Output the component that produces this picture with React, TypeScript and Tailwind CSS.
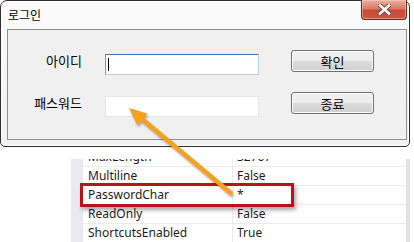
const ko = '"Noto Sans CJK KR", "Noto Sans", sans-serif';

const rows = [
  { name: 'MaxLength', value: '32767' },
  { name: 'Multiline', value: 'False' },
  { name: 'PasswordChar', value: '*' },
  { name: 'ReadOnly', value: 'False' },
  { name: 'ShortcutsEnabled', value: 'True' },
];

function WinButton({ label }: { label: string }) {
  return (
    <div className="w-[83px] h-[22px] rounded-[3px] border border-[#707070] bg-[linear-gradient(to_bottom,#f2f2f2_0%,#ebebeb_50%,#dddddd_50%,#cfcfcf_100%)] shadow-[inset_0_0_0_1px_#fbfbfb] flex items-center justify-center text-[13px] text-black leading-none">
      {label}
    </div>
  );
}

function CloseButton() {
  return (
    <div className="-mt-px mr-[2px] w-[46px] h-[20px] rounded-b-[4px] border border-t-0 border-[#6e2418] bg-[linear-gradient(to_bottom,#eab0a2_0%,#dc7a65_45%,#c94a32_55%,#c85a40_100%)] shadow-[inset_0_0_0_1px_rgba(255,210,200,0.5)] flex items-center justify-center">
      <svg width="13" height="11" viewBox="0 0 13 11">
        <path d="M2 1.5 L11 9.5 M11 1.5 L2 9.5" stroke="#5b4a48" strokeWidth="4.5" strokeLinecap="square" />
        <path d="M2 1.5 L11 9.5 M11 1.5 L2 9.5" stroke="#ffffff" strokeWidth="2.6" strokeLinecap="square" />
      </svg>
    </div>
  );
}

function LoginWindow() {
  return (
    <div className="w-[410px] h-[147px] rounded-t-[7px] rounded-b-[5px] border border-[#2f2f2f] bg-[linear-gradient(to_bottom,#fbfbfb_0%,#f1f1f1_100%)] shadow-[inset_0_0_0_1px_#ffffff] flex flex-col">
      <div className="h-[28px] flex items-start justify-between">
        <div className="pl-[7px] pt-[6px] text-[12px] leading-[16px] text-black" style={{ fontFamily: ko }}>
          로그인
        </div>
        <CloseButton />
      </div>
      <div className="ml-[6px] mr-[2px] mb-[6px] flex-1 border border-[#8e8e8e] bg-[#f0f0f0] flex flex-col" style={{ fontFamily: ko }}>
        <div className="mt-[20px] flex items-start">
          <div className="w-[74px] h-[22px] leading-[22px] text-right text-[13px] text-black">아이디</div>
          <div className="ml-[23px] mt-[4px] w-[154px] h-[21px] bg-white border border-[#b3d0ea] border-t-[#3d7aae] border-l-[#6f9dca] flex items-center">
            <span className="ml-[2px] w-px h-[13px] bg-black" />
          </div>
          <div className="ml-[32px]">
            <WinButton label="확인" />
          </div>
        </div>
        <div className="mt-[17px] flex items-start">
          <div className="w-[74px] h-[22px] leading-[22px] text-right text-[13px] text-black">패스워드</div>
          <div className="ml-[23px] mt-[4px] w-[154px] h-[21px] bg-white border border-[#e2e6ec]" />
          <div className="ml-[32px]">
            <WinButton label="종료" />
          </div>
        </div>
      </div>
    </div>
  );
}

function PropertyGrid() {
  return (
    <div className="ml-[71px] mt-[12px] w-[339px] h-[83px] overflow-hidden flex" style={{ fontFamily: '"Noto Sans", sans-serif' }}>
      <div className="w-[12px] bg-[#e9e9ef]" />
      <div className="w-[323px] flex flex-col">
        <div className="-mt-[11px]" />
        {rows.map((r) => (
          <div key={r.name} className="h-[19px] shrink-0 flex border-b border-[#ececec] text-[12px] leading-[18px] text-[#1b1b1b]">
            <div className="w-[150px] pl-[5px] border-r border-[#ececec] whitespace-nowrap">{r.name}</div>
            <div className="pl-[4px] whitespace-nowrap">{r.value}</div>
          </div>
        ))}
      </div>
      <div className="w-[4px] bg-[#e3e3e3]" />
    </div>
  );
}

export default function App() {
  return (
    <div className="relative w-[414px] h-[242px] overflow-hidden bg-white">
      <LoginWindow />
      <PropertyGrid />
      <div className="absolute left-[80px] top-[183px] w-[214px] h-[24px] border-[3px] border-[#b3161a] shadow-[2px_3px_4px_rgba(0,0,0,0.35)]" />
      <svg className="absolute left-0 top-0 drop-shadow-[1px_2px_1px_rgba(0,0,0,0.3)]" width="414" height="242">
        <line x1="142" y1="119" x2="232" y2="194" stroke="#f6a01e" strokeWidth="4.5" />
        <polygon points="129,108 137.5,125.5 147.5,113.5" fill="#f6a01e" />
      </svg>
    </div>
  );
}
